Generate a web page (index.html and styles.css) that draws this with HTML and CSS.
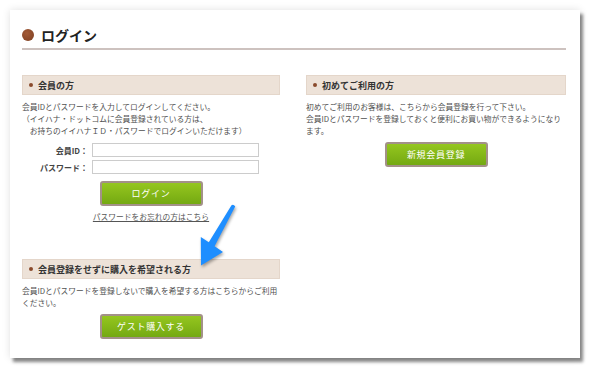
FILE: index.html
```html
<!DOCTYPE html>
<html lang="ja">
<head>
    <meta charset="UTF-8">
    <title>ログイン</title>
    <link rel="stylesheet" href="styles.css">
</head>
<body>
    <div class="panel">
        <h1 class="page-title"><span class="dot"></span>ログイン</h1>
        <div class="columns">
            <div class="col">
                <h2 class="box-head"><span class="bullet"></span>会員の方</h2>
                <p class="note">会員IDとパスワードを入力してログインしてください。<br>（イイハナ・ドットコムに会員登録されている方は、<br>　お持ちのイイハナＩＤ・パスワードでログインいただけます）</p>
                <form class="login-form">
                    <div class="form-row">
                        <label for="member-id">会員ID：</label>
                        <input type="text" id="member-id">
                    </div>
                    <div class="form-row">
                        <label for="member-pw">パスワード：</label>
                        <input type="password" id="member-pw">
                    </div>
                    <button type="button" class="btn">ログイン</button>
                </form>
                <a class="forgot" href="#">パスワードをお忘れの方はこちら</a>

                <h2 class="box-head guest-head"><span class="bullet"></span>会員登録をせずに購入を希望される方</h2>
                <p class="note">会員IDとパスワードを登録しないで購入を希望する方はこちらからご利用<br>ください。</p>
                <button type="button" class="btn">ゲスト購入する</button>
            </div>
            <div class="col">
                <h2 class="box-head"><span class="bullet"></span>初めてご利用の方</h2>
                <p class="note">初めてご利用のお客様は、こちらから会員登録を行って下さい。<br>会員IDとパスワードを登録しておくと便利にお買い物ができるようになり<br>ます。</p>
                <button type="button" class="btn">新規会員登録</button>
            </div>
        </div>

        <svg class="arrow" width="60" height="80" viewBox="195 200 60 80">
            <path d="M231.5 205.2 Q233.5 203.6 235.2 206.6 L214.6 246.3 L223 252 L201 265.5 L200.8 237 L208.8 242.3 Z" fill="#1e8eff"/>
        </svg>
    </div>
</body>
</html>
```

FILE: styles.css
```css
:root {
    --font-jp: "Noto Sans CJK JP", "Noto Sans", sans-serif;
    --color-text: #4f4f4f;
    --color-head-bg: #ede2d8;
    --color-brown: #8a4a2c;
}

html, body {
    margin: 0;
    background: #fff;
}

body {
    padding: 10px;
    font-family: var(--font-jp);
    color: var(--color-text);
}

.panel {
    position: relative;
    width: 570px;
    height: 348px;
    box-sizing: border-box;
    padding: 0 14px 0 12px;
    background: #fff;
    box-shadow: 3px 4px 3px rgba(0, 0, 0, 0.45), 0 0 8px rgba(0, 0, 0, 0.12);
}

/* title */
.page-title {
    display: flex;
    align-items: center;
    margin: 0;
    padding: 17px 0 5px 0;
    line-height: 16px;
    font-size: 14px;
    font-weight: 700;
    color: #222;
    border-bottom: 2px solid #cdc2bf;
}
.dot {
    width: 12px;
    height: 12px;
    margin-right: 7px;
    border-radius: 50%;
    background: radial-gradient(circle at 40% 35%, #a35a36, #7d3f22);
}

.columns {
    display: flex;
    gap: 26px;
    margin-top: 25px;
}
.col {
    display: flex;
    flex-direction: column;
    align-items: center;
}
.col:first-child { width: 258px; }
.col:last-child { width: 260px; }

.box-head {
    align-self: stretch;
    display: flex;
    align-items: center;
    height: 20px;
    margin: 0;
    padding: 0 0 0 6px;
    box-sizing: border-box;
    background: var(--color-head-bg);
    border: 1px solid #e4d6ca;
    font-size: 9px;
    font-weight: 700;
    color: #333;
}
.bullet {
    width: 4px;
    height: 4px;
    margin-right: 5px;
    border-radius: 50%;
    background: var(--color-brown);
}
.guest-head { margin-top: 36px; }

.note {
    align-self: stretch;
    margin: 6px 0 0 0;
    font-size: 7.75px;
    line-height: 12px;
    white-space: nowrap;
}

.login-form {
    display: flex;
    flex-direction: column;
    align-items: center;
    align-self: stretch;
    margin-top: 6px;
}
.form-row {
    display: flex;
    align-items: center;
    align-self: stretch;
    gap: 4px;
    margin-bottom: 3px;
}
.form-row label {
    width: 66px;
    text-align: right;
    font-size: 8px;
    font-weight: 700;
    color: #444;
}
.form-row input {
    width: 167px;
    height: 14px;
    margin: 0;
    padding: 0 3px;
    box-sizing: border-box;
    border: 1px solid #ccc;
    background: #fff;
}

.btn {
    width: 103px;
    height: 25px;
    margin-top: 5px;
    padding: 0;
    border: 2px solid #a39188;
    border-radius: 3px;
    background: linear-gradient(#95c61f, #74a912);
    color: #fff;
    font-family: var(--font-jp);
    font-size: 9px;
    letter-spacing: 0.7px;
    cursor: pointer;
}
.login-form .btn { margin-top: 4px; }

.forgot {
    margin-top: 5px;
    font-size: 7.75px;
    line-height: 12px;
    color: #555;
    text-decoration: underline;
}

.arrow {
    position: absolute;
    left: 185px;
    top: 190px;
    filter: drop-shadow(1px 2px 1.5px rgba(0, 0, 0, 0.35));
}
```
